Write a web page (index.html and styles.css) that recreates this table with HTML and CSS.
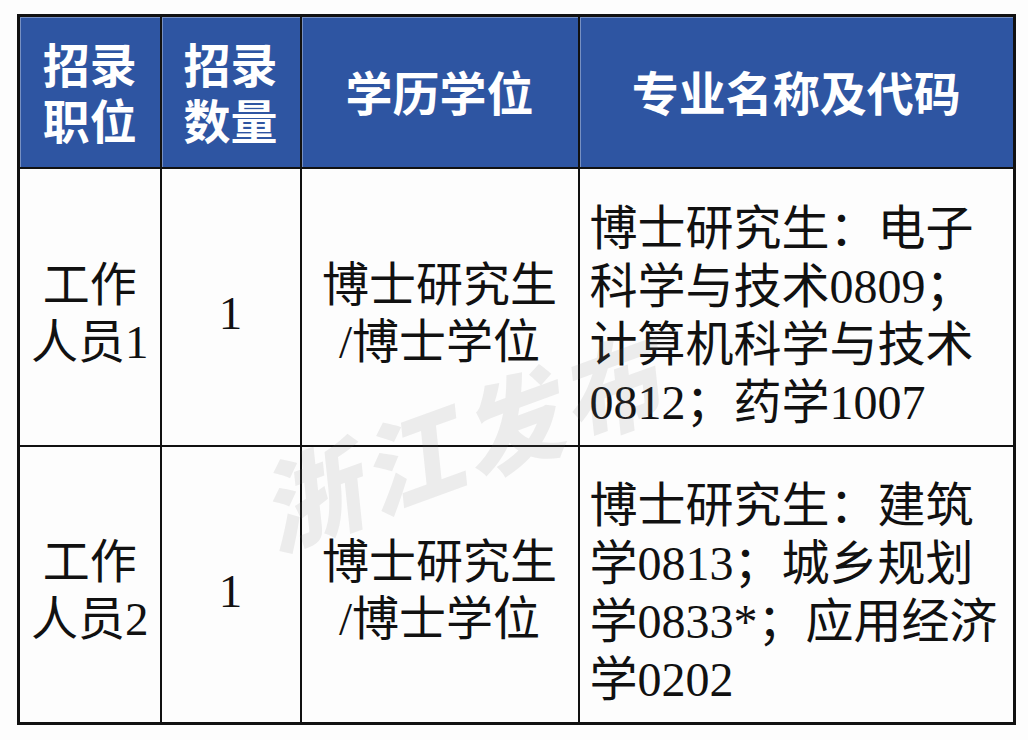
FILE: index.html
```html
<!DOCTYPE html>
<html lang="zh">
<head>
<meta charset="utf-8">
<link rel="stylesheet" href="styles.css">
</head>
<body>
<div class="page">
  <table class="grid">
    <colgroup>
      <col class="c1"><col class="c2"><col class="c3"><col class="c4">
    </colgroup>
    <thead>
      <tr class="head">
        <th>招录<br>职位</th>
        <th>招录<br>数量</th>
        <th>学历学位</th>
        <th>专业名称及代码</th>
      </tr>
    </thead>
    <tbody>
      <tr class="row">
        <td class="ctr">工作<br>人员1</td>
        <td class="ctr">1</td>
        <td class="ctr">博士研究生<br>/博士学位</td>
        <td class="left">博士研究生：电子<br>科学与技术0809；<br>计算机科学与技术<br>0812；药学1007</td>
      </tr>
      <tr class="row">
        <td class="ctr">工作<br>人员2</td>
        <td class="ctr">1</td>
        <td class="ctr">博士研究生<br>/博士学位</td>
        <td class="left">博士研究生：建筑<br>学0813；城乡规划<br>学0833*；应用经济<br>学0202</td>
      </tr>
    </tbody>
  </table>
  <div class="mark">浙江发布</div>
</div>
</body>
</html>
```

FILE: styles.css
```css
html, body {
  margin: 0;
  padding: 0;
  background: #fdfdfd;
}
.page {
  position: relative;
  width: 1028px;
  height: 740px;
  padding: 14px 0 0 17px;
  box-sizing: border-box;
}
.grid {
  border-collapse: collapse;
  table-layout: fixed;
  width: 996px;
  border: 3px solid #111;
  font-family: "Liberation Serif", "Noto Sans CJK SC", serif;
  font-size: 47px;
  line-height: 57px;
  color: #111;
}
.c1 { width: 142px; }
.c2 { width: 140px; }
.c3 { width: 278px; }
.c4 { width: 436px; }
.grid th, .grid td {
  border: 2px solid #111;
  padding: 0;
}
.head {
  height: 152px;
}
.grid .head th {
  background: #2e55a2;
  color: #fff;
  font-weight: 700;
  vertical-align: middle;
  padding-top: 6px;
  line-height: 56px;
  box-shadow: inset 1px 1px 0 rgba(255,255,255,0.35);
}
.row {
  height: 278px;
}
.grid .ctr {
  text-align: center;
  vertical-align: middle;
  padding-top: 14px;
}
.grid .left {
  text-align: left;
  vertical-align: middle;
  padding: 18px 0 0 10px;
  white-space: nowrap;
  font-size: 48px;
  line-height: 58px;
}
.mark {
  position: absolute;
  left: 236px;
  top: 442px;
  font-family: "Noto Sans CJK SC", sans-serif;
  font-weight: 900;
  font-style: italic;
  font-size: 100px;
  letter-spacing: 6px;
  color: rgba(120, 120, 120, 0.13);
  transform: rotate(-20deg);
  transform-origin: left top;
  pointer-events: none;
  white-space: nowrap;
}
```
